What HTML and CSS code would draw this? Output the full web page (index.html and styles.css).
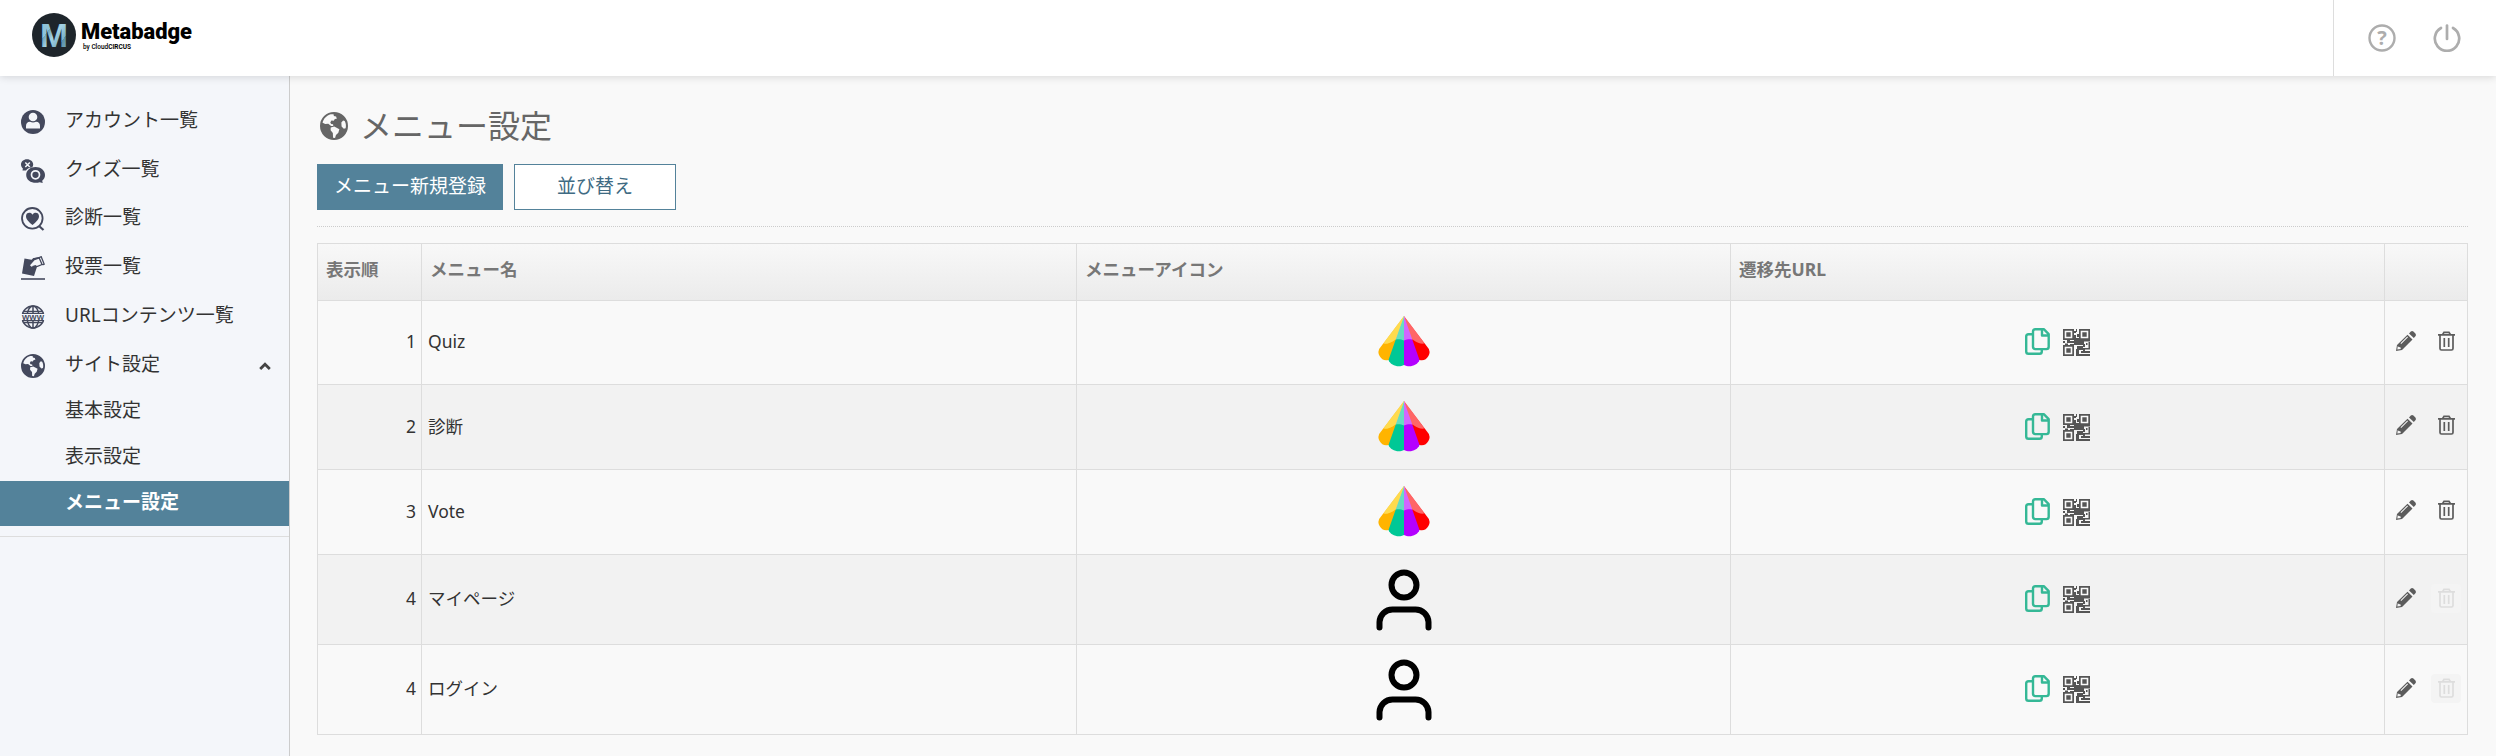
FILE: index.html
```
<!DOCTYPE html>
<html lang="ja">
<head>
  <meta charset="UTF-8">
  <meta name="viewport" content="width=device-width, initial-scale=1.0">
  <title>メニュー設定 | Metabadge</title>
  <link rel="stylesheet" href="styles.css">
</head>
<body>
  <!-- shared icons -->
  <svg class="sprite" width="0" height="0">
    <symbol id="earth" viewBox="0 0 24 24">
      <path fill="currentColor" fill-rule="evenodd" d="M12 0a12 12 0 1 0 0 24a12 12 0 1 0 0-24zM2.200 9.300C3 5.600 5.600 3 9.200 1.900l2.400 0 .3 1.500 1.900.5.6 1.800-1.700.2-.9 1.500-2-.2-1 1.900.8 1.200 1.600.1.2 1.700-1.900-.2-2.400-1.800-2.600.2zM9.200 13.300l3-.8 4.400 2.300-.9 3-2 1.900-.8 2.600-1.700-.2-.2-4.200-1.900-2.200zM18.300 8.900l1.500-1.700 1.400.6c1 2.100 1.300 4 .8 6.200l-1.600.4-1.900-2z"/>
    </symbol>
    <symbol id="umbrella" viewBox="0 0 52 52">
      <path fill="#ffb400" d="M26 1L3 31.500a8 8 0 0 0 7.500 13.500L16 43 26 1z"/>
      <path fill="#f00" d="M26 1l23 30.500a8 8 0 0 1-7.500 13.500L36 43z"/>
      <path fill="#00c896" d="M26 1L10.500 45c2 5.500 10 8 15.500 5z"/>
      <path fill="#b400ff" d="M26 1l15.500 44c-2 5.500-10 8-15.500 5z"/>
      <path fill="#fff" fill-opacity=".4" d="M26 1L5.500 28.500c3.500.5 7.500-.5 10.500-3 3-2 7-1 10 0 3-1 7-2 10 0 3 2.500 7 3.500 10.500 3z"/>
      <path fill="#ffe13c" fill-opacity=".6" d="M26 1L5.500 28.500c4 .5 8-1 11.500-3.800z"/>
    </symbol>
    <symbol id="person" viewBox="0 0 56 62">
      <g fill="none" stroke="#000" stroke-width="6">
        <circle cx="28" cy="16" r="12.500"/>
        <path stroke-linecap="round" d="M3.500 58.500V53a13 13 0 0 1 13-12.500h23A13 13 0 0 1 52.500 53v5.500"/>
      </g>
    </symbol>
    <symbol id="copy" viewBox="0 0 25 27">
      <g fill="none" stroke="#35b896" stroke-width="2.400" stroke-linejoin="round">
        <path d="M8 6.200H3.500Q1.200 6.200 1.200 8.500v15q0 2.300 2.300 2.300h11q2.300 0 2.300-2.300v-2.300"/>
        <path d="M10.300 1.200h8.500l4.900 4.900v12.700q0 2.300-2.300 2.300H10.300Q8 21.100 8 18.800V3.500q0-2.300 2.300-2.300zM17 1.500v6h6.500"/>
      </g>
    </symbol>
    <symbol id="qr" viewBox="0 0 27 27">
      <path fill="#555" d="M0 0h11v11H0zM16 0h11v11H16zM0 16h11v11H0zM11 2h2v2h-2zM13 0h1v3h-1zM14 5h2v3h-2zM11 6h2v5h-2zM11 9h5v7h-5zM0 12h2v2H0zM4 11h3v3H4zM2 14.500h3V16H2zM7 12h4v2H7zM7 15h4v1H7zM16 11h5v5h-5zM21 11h6v1.500h-6zM23 14h1.500v2H23zM25.500 13H27v6h-1.500zM20 15h2v3h-2zM14 17h6v4h-6zM20 19h7v1.500h-7zM13 20h3v7h-3zM18 22h9v2h-9zM16 25h11v2H16zM20 20h2v3h-2z"/>
      <path fill="none" stroke="#f9f9f9" stroke-width="1.600" d="M2.500 2.500h6v6h-6zM18.500 2.500h6v6h-6zM2.500 18.500h6v6h-6z"/>
    </symbol>
    <symbol id="pencil" viewBox="0 0 20 20">
      <path fill="currentColor" fill-rule="evenodd" d="M0 20l1-6L11.500 3.700l5 4.800L6 19zM13 2.400l1.800-1.800q1.300-1 2.600 0l2 2q1 1.300 0 2.600L17.800 7zM1.800 15l-.5 3.500 3.500-.6-.4-1.600-1.800-.2zM4.500 12.300l.7.6 6.800-6.700-.7-.6z"/>
    </symbol>
    <symbol id="trash" viewBox="0 0 17 20">
      <g fill="none" stroke="currentColor" stroke-width="1.700">
        <path d="M0 3.800h17M4.700 3.500L6 1.300h5l1.300 2.200M2 4v13.500q0 1.500 1.500 1.500h10q1.500 0 1.500-1.500V4M6.300 7v9M10.700 7v9"/>
      </g>
    </symbol>
  </svg>

  <header class="header">
    <a class="logo" href="#">
      <svg width="180" height="50" viewBox="0 0 180 50">
        <defs>
          <linearGradient id="facet" x1="0" y1="0" x2="1" y2="1">
            <stop offset="0" stop-color="#8fc3d8"/>
            <stop offset=".34" stop-color="#8fc3d8"/>
            <stop offset=".34" stop-color="#6fa3ba"/>
            <stop offset=".5" stop-color="#a5d3e4"/>
            <stop offset=".72" stop-color="#79b0c7"/>
            <stop offset=".72" stop-color="#5a8ea6"/>
            <stop offset="1" stop-color="#82bad0"/>
          </linearGradient>
        </defs>
        <circle cx="24" cy="25" r="22" fill="#1e252b"/>
        <text class="logo-mark" x="10" y="37" textLength="28" lengthAdjust="spacingAndGlyphs" fill="url(#facet)">M</text>
        <text class="logo-name" x="51" y="28.700" textLength="111" lengthAdjust="spacingAndGlyphs">Metabadge</text>
        <text class="logo-by" x="53" y="39" textLength="48" lengthAdjust="spacingAndGlyphs">by Cloud<tspan font-weight="700">CIRCUS</tspan></text>
      </svg>
    </a>
    <div class="header-tools">
      <svg width="28" height="28" viewBox="0 0 28 28">
        <circle cx="14" cy="14" r="12.500" fill="none" stroke="#adadad" stroke-width="2.400"/>
        <text class="help-mark" x="14" y="21.300" text-anchor="middle">?</text>
      </svg>
      <svg width="28" height="28" viewBox="0 0 28 28">
        <g fill="none" stroke="#adadad" stroke-width="2.700" stroke-linecap="round">
          <path d="M8 4a12.200 12.200 0 1 0 12 0"/>
          <path d="M14 1.500v13.500"/>
        </g>
      </svg>
    </div>
  </header>

  <div class="layout">
    <nav class="sidebar">
      <ul class="menu">
        <li class="menu-item">
          <svg viewBox="0 0 24 24">
            <circle cx="12" cy="12" r="12" fill="#44495d"/>
            <circle cx="12" cy="7" r="4.300" fill="#f4f6fa"/>
            <path fill="#f4f6fa" d="M5 18.500v-2.500q0-4 4-4.200 3 1.300 6 0 4 .2 4 4.200v2.500z"/>
          </svg>
          <span>アカウント一覧</span>
        </li>
        <li class="menu-item">
          <svg viewBox="0 0 24 24">
            <path fill="#44495d" d="M6 .3c3.500 0 6.200 2.300 6.200 5.200 0 1-.3 2-1 2.800-2.800.3-5 1.500-6.200 3.200l-3.500 0 .4-2C.8 8.500 0 7.200 0 5.500 0 2.600 2.500.3 6 .3z"/>
            <path stroke="#f4f6fa" stroke-width="1.500" d="M4.300 3.500l4.500 4.500M8.800 3.500L4.300 8"/>
            <path fill="#44495d" d="M14.500 8c5.300 0 9.500 3.500 9.500 8 0 2.300-1 4.300-2.800 5.700l.5 2.300-3-.8c-6 2-13.500-.8-13.500-7.200 0-4.500 4-8 9.300-8z"/>
            <circle cx="14.500" cy="15.800" r="4" fill="none" stroke="#f4f6fa" stroke-width="1.700"/>
          </svg>
          <span>クイズ一覧</span>
        </li>
        <li class="menu-item">
          <svg viewBox="0 0 24 24">
            <circle cx="11.300" cy="11.300" r="10.300" fill="none" stroke="#44495d" stroke-width="1.800"/>
            <path stroke="#44495d" stroke-width="2.200" d="M18 19l4.500 4"/>
            <path fill="#44495d" d="M11.500 18C7 14.500 5 12 5 9.300c0-4 4.800-4.500 6.500-1.500C13.200 4.800 18 5.300 18 9.300c0 2.700-2 5.200-6.500 8.700z"/>
          </svg>
          <span>診断一覧</span>
        </li>
        <li class="menu-item">
          <svg viewBox="0 0 24 24">
            <path fill="#44495d" d="M3.500 2.500l7 1.300 2-1.700 5.500-.6.5 1-5 1.700-4.500 5 1.500 1.500 4-1.800 1.500 1.800-3 9.300L1 17.500z"/>
            <path fill="none" stroke="#44495d" stroke-width="1.300" d="M12 3.200l6-1.700 3 7-4.500 1.800-4.800.2M18.500 1.300l1.700-.6 3 7.500-1.700.8"/>
            <path stroke="#44495d" stroke-width="1.600" d="M0 23h24"/>
          </svg>
          <span>投票一覧</span>
        </li>
        <li class="menu-item">
          <svg viewBox="0 0 24 24">
            <g fill="none" stroke="#44495d" stroke-width="1.500">
              <circle cx="12" cy="12" r="11"/>
              <ellipse cx="12" cy="12" rx="6" ry="11"/>
              <path d="M12 1v22M3 6.500h18M3 17.500h18"/>
            </g>
            <path fill="#f4f6fa" d="M0 8.500h24v7H0z"/>
            <path stroke="#44495d" d="M1 8.500h22M1 15.500h22"/>
            <text class="www" x="1" y="14.500" textLength="22" lengthAdjust="spacingAndGlyphs">WWW</text>
          </svg>
          <span>URLコンテンツ一覧</span>
        </li>
        <li class="menu-item">
          <svg><use href="#earth"/></svg>
          <span>サイト設定</span>
          <svg class="caret" viewBox="0 0 12 8"><path d="M1.200 7L6 2.200 10.800 7" fill="none" stroke="#444" stroke-width="2.800"/></svg>
        </li>
      </ul>
      <ul class="submenu">
        <li>基本設定</li>
        <li>表示設定</li>
        <li class="active">メニュー設定</li>
      </ul>
    </nav>

    <main class="main">
      <h1 class="title"><svg><use href="#earth"/></svg>メニュー設定</h1>
      <div class="buttons">
        <a class="btn btn-primary" href="#">メニュー新規登録</a>
        <a class="btn btn-outline" href="#">並び替え</a>
      </div>
      <table class="list">
        <colgroup>
          <col class="col-order"><col class="col-name"><col class="col-icon"><col class="col-url"><col class="col-action">
        </colgroup>
        <thead>
          <tr>
            <th>表示順</th>
            <th>メニュー名</th>
            <th>メニューアイコン</th>
            <th>遷移先URL</th>
            <th></th>
          </tr>
        </thead>
        <tbody>
          <tr class="first">
            <td class="order">1</td>
            <td>Quiz</td>
            <td><svg class="umbrella"><use href="#umbrella"/></svg></td>
            <td><div class="links"><svg class="copy"><use href="#copy"/></svg><svg class="qr"><use href="#qr"/></svg></div></td>
            <td><div class="actions"><svg class="pencil"><use href="#pencil"/></svg><span class="delete"><svg><use href="#trash"/></svg></span></div></td>
          </tr>
          <tr>
            <td class="order">2</td>
            <td>診断</td>
            <td><svg class="umbrella"><use href="#umbrella"/></svg></td>
            <td><div class="links"><svg class="copy"><use href="#copy"/></svg><svg class="qr"><use href="#qr"/></svg></div></td>
            <td><div class="actions"><svg class="pencil"><use href="#pencil"/></svg><span class="delete"><svg><use href="#trash"/></svg></span></div></td>
          </tr>
          <tr>
            <td class="order">3</td>
            <td>Vote</td>
            <td><svg class="umbrella"><use href="#umbrella"/></svg></td>
            <td><div class="links"><svg class="copy"><use href="#copy"/></svg><svg class="qr"><use href="#qr"/></svg></div></td>
            <td><div class="actions"><svg class="pencil"><use href="#pencil"/></svg><span class="delete"><svg><use href="#trash"/></svg></span></div></td>
          </tr>
          <tr class="tall">
            <td class="order">4</td>
            <td>マイページ</td>
            <td><svg class="person"><use href="#person"/></svg></td>
            <td><div class="links"><svg class="copy"><use href="#copy"/></svg><svg class="qr"><use href="#qr"/></svg></div></td>
            <td><div class="actions"><svg class="pencil"><use href="#pencil"/></svg><span class="delete disabled"><svg><use href="#trash"/></svg></span></div></td>
          </tr>
          <tr class="tall">
            <td class="order">4</td>
            <td>ログイン</td>
            <td><svg class="person"><use href="#person"/></svg></td>
            <td><div class="links"><svg class="copy"><use href="#copy"/></svg><svg class="qr"><use href="#qr"/></svg></div></td>
            <td><div class="actions"><svg class="pencil"><use href="#pencil"/></svg><span class="delete disabled"><svg><use href="#trash"/></svg></span></div></td>
          </tr>
        </tbody>
      </table>
    </main>
  </div>
</body>
</html>
```
FILE: styles.css
```
* {
  box-sizing: border-box;
}
body {
  margin: 0;
  height: 100vh;
  display: flex;
  flex-direction: column;
  overflow: hidden;
  background-color: #f9f9f9;
  color: #333;
  font-family: "Noto Sans", "Noto Sans CJK JP", sans-serif;
  font-size: 19px;
}
ul {
  list-style: none;
  margin: 0;
  padding: 0;
}
svg {
  display: block;
  flex: none;
}
.sprite {
  position: absolute;
}

/* header */
.header {
  position: relative;
  z-index: 1;
  flex: none;
  height: 76px;
  display: flex;
  justify-content: space-between;
  background-color: #fff;
  box-shadow: 0 1px 8px rgba(0, 0, 0, 0.14);
}
.logo {
  padding: 10px 0 0 30px;
}
.logo-mark {
  font: bold 34px "Liberation Sans", sans-serif;
}
.logo-name {
  font: 900 22.500px Roboto, sans-serif;
}
.logo-by {
  font: 500 7px Roboto, sans-serif;
}
.header-tools {
  width: 163px;
  display: flex;
  align-items: center;
  gap: 37px;
  padding-left: 34px;
  border-left: 1px solid #ddd;
}
.help-mark {
  font: bold 20px "Open Sans", sans-serif;
  fill: #adadad;
}

/* sidebar */
.layout {
  flex: 1;
  display: flex;
}
.sidebar {
  width: 290px;
  padding-top: 20px;
  background-color: #f4f6fa;
  border-right: 1px solid #ccc;
}
.menu-item {
  height: 48.800px;
  display: flex;
  align-items: center;
  padding: 0 18px 0 21px;
  color: #44495d;
}
.menu-item svg {
  width: 24px;
  height: 24px;
  margin-top: 3px;
}
.menu-item span {
  flex: 1;
  padding-left: 20px;
  line-height: 28px;
  margin-bottom: 1px;
  color: #333;
}
.menu-item .caret {
  width: 12px;
  height: 8px;
  margin-top: 3px;
}
.www {
  font: bold 6.500px "Liberation Sans", sans-serif;
  fill: #44495d;
}
.submenu {
  padding-bottom: 10px;
  border-bottom: 1px solid #ddd;
}
.submenu li {
  height: 46px;
  line-height: 42px;
  padding-left: 65px;
}
.submenu .active {
  height: 45px;
  background-color: #53829a;
  color: #fff;
  font-weight: bold;
}

/* main */
.main {
  flex: 1;
  padding: 13px 28px 0 27px;
}
.title {
  display: flex;
  align-items: center;
  gap: 12px;
  height: 75px;
  margin: 0;
  padding: 0 0 1px 3px;
  color: #666;
  font-size: 32px;
  font-weight: normal;
  line-height: 40px;
}
.title svg {
  width: 28px;
  height: 28px;
}
.buttons {
  display: flex;
  gap: 11px;
  padding-bottom: 16px;
  border-bottom: 1px dotted #ccc;
}
.btn {
  height: 46px;
  line-height: 42px;
  border: 1px solid #53829a;
  text-align: center;
  text-decoration: none;
}
.btn-primary {
  width: 186px;
  background-color: #53829a;
  color: #fff;
}
.btn-outline {
  width: 162px;
  background-color: #fff;
  color: #3f6b83;
}

/* table */
.list {
  width: 2151px;
  margin-top: 16px;
  table-layout: fixed;
  border-spacing: 0;
  border-top: 1px solid #ddd;
  border-left: 1px solid #ddd;
  font-size: 17.500px;
  line-height: 24px;
}
.col-order {
  width: 104px;
}
.col-name {
  width: 655px;
}
.col-icon,
.col-url {
  width: 654px;
}
.col-action {
  width: 83px;
}
.list th {
  height: 57px;
  padding: 0 8px 6px;
  text-align: left;
  color: #777;
  border-right: 1px solid #ddd;
  border-bottom: 1px solid #ddd;
  background: linear-gradient(#f8f8f8, #ebebeb);
}
.list td {
  height: 85px;
  padding: 0 6px 3px;
  border-right: 1px solid #ddd;
  border-bottom: 1px solid #ddd;
}
.list .first td {
  height: 84px;
}
.list .tall td {
  height: 90px;
}
.list tbody tr:nth-child(even) {
  background-color: #f2f2f2;
}
.list .order {
  text-align: right;
  padding-right: 5px;
}
.umbrella {
  width: 52px;
  height: 52px;
  margin: 0 auto;
}
.person {
  width: 56px;
  height: 62px;
  margin: 3px auto 0;
}
.links {
  display: flex;
  justify-content: center;
  gap: 13px;
  padding-top: 2px;
}
.copy {
  width: 25px;
  height: 27px;
}
.qr {
  width: 27px;
  height: 27px;
  margin-top: 1px;
}
.actions {
  display: flex;
  align-items: center;
  gap: 15px;
  padding-left: 5px;
  color: #5c5c5c;
}
.pencil {
  width: 20px;
  height: 20px;
  margin-bottom: 1px;
}
.delete {
  width: 30px;
  height: 29px;
  display: flex;
  align-items: center;
  justify-content: center;
  border-radius: 4px;
}
.delete svg {
  width: 17px;
  height: 20px;
  margin-bottom: 1px;
}
.delete.disabled {
  background-color: #f4f4f4;
  color: #ddd;
}
```
